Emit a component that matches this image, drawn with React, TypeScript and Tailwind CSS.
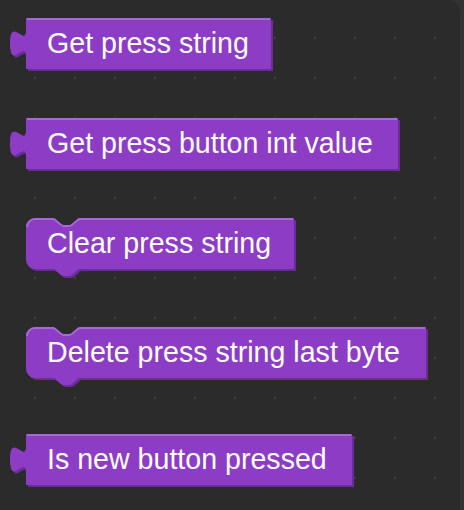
import React from 'react';

type BlockKind = 'output' | 'statement';

interface BlockDef {
    label: string;
    kind: BlockKind;
    width: number;
    gap: string;
}

const H = 51;
const TAB = 16;
const R = 9;
const NOTCH_X = 27;

const blocks: BlockDef[] = [
    { label: 'Get press string', kind: 'output', width: 245, gap: 'mt-[18px]' },
    { label: 'Get press button int value', kind: 'output', width: 372, gap: 'mt-[49px]' },
    { label: 'Clear press string', kind: 'statement', width: 268, gap: 'mt-[49px]' },
    { label: 'Delete press string last byte', kind: 'statement', width: 400, gap: 'mt-[58px]' },
    { label: 'Is new button pressed', kind: 'output', width: 326, gap: 'mt-[56px]' },
];

// block outline, same shapes Blockly draws (scaled up)
function outline(kind: BlockKind, w: number) {
    if (kind === 'output') {
        return `M ${TAB},0 H ${TAB + w} V ${H} H ${TAB} V 39 c 0,-18 -16,14.4 -16,-13.5 s 16,4.5 16,-13.5 Z`;
    }
    return [
        `M 0,${R}`,
        `A ${R} ${R} 0 0 1 ${R},0`,
        `H ${NOTCH_X}`,
        'c 3,0 7,7 11,7 h 5 c 4,0 8,-7 11,-7',
        `H ${w} V ${H}`,
        `H ${NOTCH_X + 27}`,
        'c -3,0 -7,7 -11,7 h -5 c -4,0 -8,-7 -11,-7',
        `H ${R}`,
        `A ${R} ${R} 0 0 1 0,${H - R}`,
        'Z',
    ].join(' ');
}

function highlight(kind: BlockKind, w: number) {
    if (kind === 'output') {
        return `M ${TAB + 1},1 H ${TAB + w - 1}`;
    }
    return `M 1,${R} A ${R - 1} ${R - 1} 0 0 1 ${R},1 H ${NOTCH_X} c 3,0 7,7 11,7 h 5 c 4,0 8,-7 11,-7 H ${w - 1}`;
}

const Block: React.FC<{ def: BlockDef }> = ({ def }) => {
    const isOutput = def.kind === 'output';
    const outer = (isOutput ? TAB : 0) + def.width;
    const d = outline(def.kind, def.width);

    return (
        <div
            className={`relative h-[51px] shrink-0 ${def.gap} ${isOutput ? 'ml-0' : 'ml-[16px]'}`}
            style={{ width: outer }}
        >
            <svg
                className="absolute top-0 left-0 overflow-visible"
                width={outer + 2}
                height={H + 10}
                viewBox={`0 0 ${outer + 2} ${H + 10}`}
            >
                <path d={d} fill="#6a2c98" transform="translate(2,2)" />
                <path d={d} fill="#8d3cc6" />
                <path d={highlight(def.kind, def.width)} fill="none" stroke="#a66ad6" strokeWidth="2" />
            </svg>
            <span
                className={`relative block whitespace-nowrap text-white text-[28.6px] leading-[51px] font-['Liberation_Sans',Arial,sans-serif] ${isOutput ? 'pl-[37px]' : 'pl-[21px]'}`}
            >
                {def.label}
            </span>
        </div>
    );
};

const App: React.FC = () => {
    return (
        <div className="w-[464px] h-[510px] bg-[#333333] flex overflow-hidden">
            {/* workspace canvas with dotted grid */}
            <div className="w-[460px] h-full rounded-tr-[12px] bg-[#2b2b2b] bg-[radial-gradient(circle,#404040_1px,transparent_1.5px)] bg-[length:40px_40px] bg-[position:15px_18px] flex flex-col items-start pl-[10px]">
                {blocks.map((b) => (
                    <Block key={b.label} def={b} />
                ))}
            </div>
        </div>
    );
};

export default App;
